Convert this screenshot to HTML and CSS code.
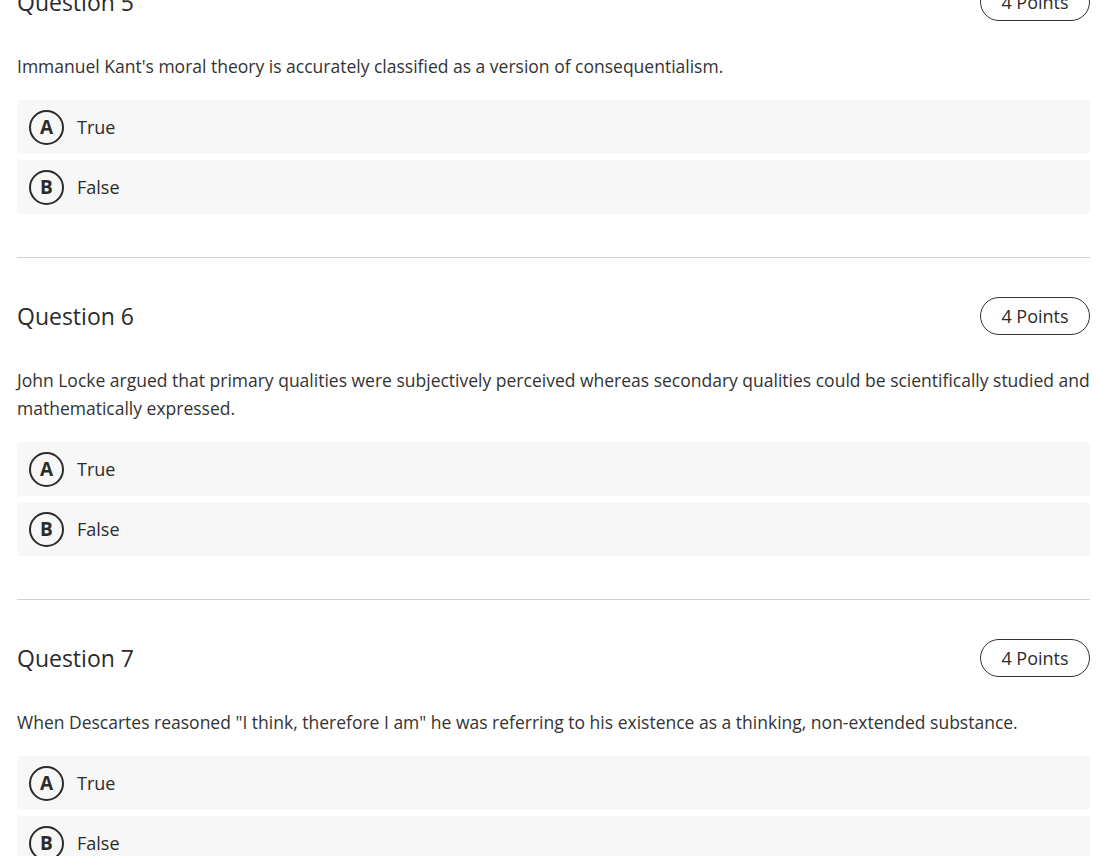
FILE: index.html
```html
<!DOCTYPE html>
<html lang="en">
<head>
<meta charset="utf-8">
<title>Quiz</title>
<link rel="stylesheet" href="styles.css">
</head>
<body>
<main class="quiz">
  <section class="question first">
    <div class="q-header">
      <h2 class="q-title">Question 5</h2>
      <span class="q-points">4 Points</span>
    </div>
    <p class="q-text">Immanuel Kant's moral theory is accurately classified as a version of consequentialism.</p>
    <div class="options">
      <div class="option"><span class="letter">A</span><span class="label">True</span></div>
      <div class="option"><span class="letter">B</span><span class="label">False</span></div>
    </div>
  </section>
  <hr class="divider">
  <section class="question">
    <div class="q-header">
      <h2 class="q-title">Question 6</h2>
      <span class="q-points">4 Points</span>
    </div>
    <p class="q-text">John Locke argued that primary qualities were subjectively perceived whereas secondary qualities could be scientifically studied and mathematically expressed.</p>
    <div class="options">
      <div class="option"><span class="letter">A</span><span class="label">True</span></div>
      <div class="option"><span class="letter">B</span><span class="label">False</span></div>
    </div>
  </section>
  <hr class="divider">
  <section class="question">
    <div class="q-header">
      <h2 class="q-title">Question 7</h2>
      <span class="q-points">4 Points</span>
    </div>
    <p class="q-text">When Descartes reasoned "I think, therefore I am" he was referring to his existence as a thinking, non-extended substance.</p>
    <div class="options">
      <div class="option"><span class="letter">A</span><span class="label">True</span></div>
      <div class="option"><span class="letter">B</span><span class="label">False</span></div>
    </div>
  </section>
</main>
</body>
</html>
```

FILE: styles.css
```css
* { box-sizing: border-box; }
html, body {
  margin: 0;
  padding: 0;
  background: #ffffff;
  overflow: hidden;
}
body {
  font-family: "Open Sans", "Liberation Sans", sans-serif;
  color: #333333;
}
.quiz {
  width: 1073px;
  margin-left: 17px;
}
.question.first {
  margin-top: -17px;
}
.q-header {
  display: flex;
  align-items: center;
  justify-content: space-between;
  height: 38px;
}
.q-title {
  margin: 0;
  font-size: 23px;
  font-weight: 500;
  line-height: 32px;
  color: #2b2b2b;
}
.q-points {
  display: flex;
  align-items: center;
  justify-content: center;
  width: 110px;
  height: 38px;
  border: 1px solid #333333;
  border-radius: 19px;
  font-size: 18px;
  font-weight: 500;
  color: #2b2b2b;
}
.q-text {
  margin: 31px 0 0;
  font-size: 17.5px;
  line-height: 28px;
  color: #333333;
}
.options {
  margin-top: 20px;
  display: flex;
  flex-direction: column;
  gap: 6px;
}
.option {
  display: flex;
  align-items: center;
  height: 54px;
  padding-left: 12px;
  background: #f7f7f7;
  border-radius: 3px;
}
.letter {
  display: flex;
  align-items: center;
  justify-content: center;
  width: 35px;
  height: 35px;
  border: 2px solid #2b2b2b;
  border-radius: 50%;
  font-size: 19px;
  font-weight: 700;
  color: #2b2b2b;
}
.label {
  margin-left: 13px;
  font-size: 18px;
  font-weight: 500;
  color: #2b2b2b;
}
.divider {
  margin: 43px 0 39px;
  border: 0;
  border-top: 1px solid #d0d0d0;
  height: 0;
}
```
